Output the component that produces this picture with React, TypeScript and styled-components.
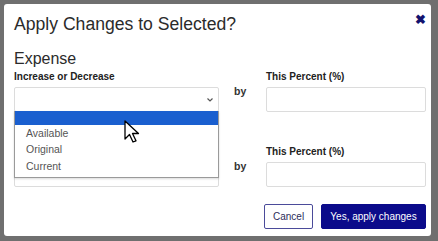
import React from "react";
import styled, { createGlobalStyle } from "styled-components";

const Global = createGlobalStyle`
  html, body { margin: 0; padding: 0; background: #6f6f6f; }
  body { width: 438px; height: 241px; overflow: hidden; font-family: "Liberation Sans", Arial, sans-serif; }
  * { box-sizing: border-box; }
`;

const Backdrop = styled.div`
  width: 438px;
  height: 241px;
  padding: 4px 7px 5px 4px;
  background: #6f6f6f;
`;

const Modal = styled.div`
  position: relative;
  width: 427px;
  height: 232px;
  background: #fff;
  border-radius: 3px;
  padding: 9px 5px 0 10px;
  display: flex;
  flex-direction: column;
`;

const Header = styled.div`
  display: flex;
  justify-content: space-between;
  align-items: flex-start;
  height: 36px;
`;

const Title = styled.h1`
  margin: 0;
  font-size: 17.6px;
  font-weight: 400;
  color: #2b2b2b;
  line-height: 22px;
`;

const Close = styled.span`
  font-size: 13px;
  font-weight: 700;
  color: #12126e;
  line-height: 14px;
  margin-top: 0;
  margin-right: 0;
`;

const Section = styled.h2`
  margin: 0;
  font-size: 16px;
  font-weight: 400;
  color: #2b2b2b;
  line-height: 20px;
  height: 22px;
`;

const Row = styled.div<{ $mt?: number }>`
  display: grid;
  grid-template-columns: 205px 47px 160px;
  margin-top: ${(p) => p.$mt ?? 0}px;
`;

const Field = styled.div`
  display: flex;
  flex-direction: column;
`;

const Label = styled.label`
  font-size: 10px;
  font-weight: 700;
  color: #222;
  line-height: 12px;
  height: 16px;
`;

const Box = styled.div`
  height: 25px;
  border: 1px solid #dcdcdc;
  border-radius: 2px;
  background: #fff;
  display: flex;
  align-items: center;
  justify-content: flex-end;
  padding-right: 4px;
`;

const By = styled.div`
  font-size: 10.5px;
  font-weight: 700;
  color: #333;
  padding: 14px 0 0 15px;
`;

const Chevron = () => (
  <svg width="8" height="6" viewBox="0 0 8 6">
    <path d="M1.5 1.5 L4 4 L6.5 1.5" fill="none" stroke="#555" strokeWidth="1.2" />
  </svg>
);

const List = styled.ul`
  position: absolute;
  left: 10px;
  top: 107px;
  width: 205px;
  margin: 0;
  padding: 0 0 3px 0;
  list-style: none;
  background: #fff;
  border: 1px solid #9a9a9a;
  border-top: none;
  box-shadow: 0 1px 2px rgba(0, 0, 0, 0.15);
`;

const Item = styled.li<{ $active?: boolean }>`
  height: ${(p) => (p.$active ? 14 : 16.3)}px;
  line-height: 16px;
  padding-left: 11px;
  font-size: 10.5px;
  color: #555;
  background: ${(p) => (p.$active ? "#1a5fcf" : "transparent")};
`;

const Cursor = styled.svg`
  position: absolute;
  left: 120px;
  top: 116px;
`;

const Footer = styled.div`
  margin-top: auto;
  display: flex;
  justify-content: flex-end;
  gap: 8px;
  padding-bottom: 7px;
`;

const Button = styled.button<{ $primary?: boolean }>`
  height: 25px;
  padding: 0 ${(p) => (p.$primary ? 6 : 8)}px;
  font-family: "Liberation Sans", Arial, sans-serif;
  font-size: 10px;
  border-radius: 2px;
  border: 1px solid ${(p) => (p.$primary ? "#0b0b8a" : "#4b4b9a")};
  background: ${(p) => (p.$primary ? "#0b0b8a" : "#fff")};
  color: ${(p) => (p.$primary ? "#fff" : "#2d2d5a")};
  width: ${(p) => (p.$primary ? 105 : 49)}px;
`;

export default function App() {
  return (
    <>
      <Global />
      <Backdrop>
        <Modal>
          <Header>
            <Title>Apply Changes to Selected?</Title>
            <Close>✖</Close>
          </Header>
          <Section>Expense</Section>
          <Row>
            <Field>
              <Label>Increase or Decrease</Label>
              <Box>
                <Chevron />
              </Box>
            </Field>
            <By>by</By>
            <Field>
              <Label>This Percent (%)</Label>
              <Box />
            </Field>
          </Row>
          <Row $mt={34}>
            <Field>
              <Label />
              <Box>
                <Chevron />
              </Box>
            </Field>
            <By>by</By>
            <Field>
              <Label>This Percent (%)</Label>
              <Box />
            </Field>
          </Row>
          <Footer>
            <Button>Cancel</Button>
            <Button $primary>Yes, apply changes</Button>
          </Footer>
          <List>
            <Item $active />
            <Item>Available</Item>
            <Item>Original</Item>
            <Item>Current</Item>
          </List>
          <Cursor width="16" height="24" viewBox="0 0 16 24">
            <path d="M1 1 L1 19 L5.5 14.5 L9 22 L12 20.8 L8.5 13.5 L14.5 13.5 Z" fill="#fff" stroke="#000" strokeWidth="1.3" strokeLinejoin="round" />
          </Cursor>
        </Modal>
      </Backdrop>
    </>
  );
}
